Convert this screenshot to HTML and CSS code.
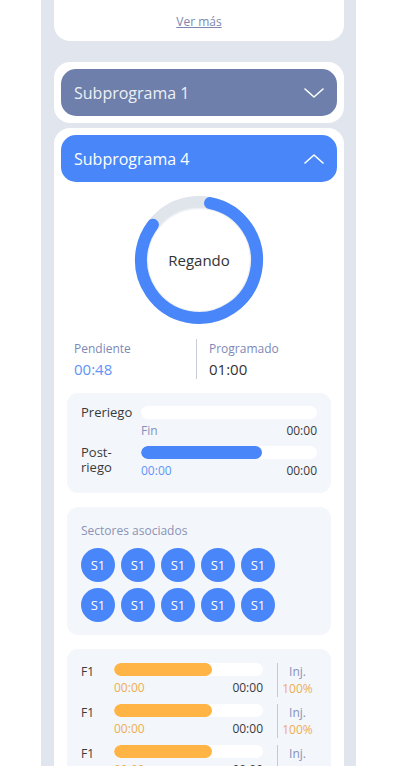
FILE: index.html
```html
<!DOCTYPE html>
<html lang="es">
<head>
    <meta charset="UTF-8">
    <meta name="viewport" content="width=device-width, initial-scale=1.0">
    <title>Subprogramas</title>
    <link rel="stylesheet" href="styles.css">
</head>
<body>
    <div class="screen">
        <div class="card card-top">
            <a href="#" class="more-link">Ver más</a>
        </div>

        <div class="card accordion">
            <div class="accordion-header muted">
                <span>Subprograma 1</span>
                <svg class="chevron" width="20" height="10" viewBox="0 0 20 10">
                    <polyline points="1,1 10,9 19,1" fill="none" stroke="#fff" stroke-width="1.6" stroke-linecap="round" stroke-linejoin="round"/>
                </svg>
            </div>
        </div>

        <div class="card accordion open">
            <div class="accordion-header active">
                <span>Subprograma 4</span>
                <svg class="chevron" width="20" height="10" viewBox="0 0 20 10">
                    <polyline points="1,9 10,1 19,9" fill="none" stroke="#fff" stroke-width="1.6" stroke-linecap="round" stroke-linejoin="round"/>
                </svg>
            </div>

            <div class="donut">
                <svg width="130" height="130" viewBox="0 0 130 130">
                    <circle cx="65" cy="65" r="58" fill="none" stroke="#e0e5ec" stroke-width="12"/>
                    <circle cx="65" cy="65" r="51.5" fill="#fff" stroke="#eef0f3" stroke-width="1.5"/>
                    <circle cx="65" cy="65" r="58" fill="none" stroke="#4886f9" stroke-width="12"
                        stroke-linecap="round" stroke-dasharray="299.6 364.4"
                        transform="rotate(-79 65 65)"/>
                </svg>
                <span class="donut-label">Regando</span>
            </div>

            <div class="stats">
                <div class="stat">
                    <div class="stat-label">Pendiente</div>
                    <div class="stat-value blue">00:48</div>
                </div>
                <div class="stat stat-right">
                    <div class="stat-label">Programado</div>
                    <div class="stat-value">01:00</div>
                </div>
            </div>

            <div class="panel phases">
                <div class="phase">
                    <div class="phase-label">Preriego</div>
                    <div class="bar"><div class="bar-fill" style="width: 0%"></div></div>
                    <div class="times">
                        <span class="muted-text">Fin</span>
                        <span>00:00</span>
                    </div>
                </div>
                <div class="phase">
                    <div class="phase-label">Post-<br>riego</div>
                    <div class="bar"><div class="bar-fill" style="width: 69%"></div></div>
                    <div class="times">
                        <span class="blue">00:00</span>
                        <span>00:00</span>
                    </div>
                </div>
            </div>

            <div class="panel sectors">
                <div class="panel-title">Sectores asociados</div>
                <div class="sector-grid">
                    <span class="sector">S1</span>
                    <span class="sector">S1</span>
                    <span class="sector">S1</span>
                    <span class="sector">S1</span>
                    <span class="sector">S1</span>
                    <span class="sector">S1</span>
                    <span class="sector">S1</span>
                    <span class="sector">S1</span>
                    <span class="sector">S1</span>
                    <span class="sector">S1</span>
                </div>
            </div>

            <div class="panel fertilizers">
                <div class="fert">
                    <div class="fert-name">F1</div>
                    <div class="fert-main">
                        <div class="bar"><div class="bar-fill orange" style="width: 66%"></div></div>
                        <div class="times">
                            <span class="orange-text">00:00</span>
                            <span>00:00</span>
                        </div>
                    </div>
                    <div class="fert-inj">
                        <span class="muted-text">Inj.</span>
                        <span class="orange-text">100%</span>
                    </div>
                </div>
                <div class="fert">
                    <div class="fert-name">F1</div>
                    <div class="fert-main">
                        <div class="bar"><div class="bar-fill orange" style="width: 66%"></div></div>
                        <div class="times">
                            <span class="orange-text">00:00</span>
                            <span>00:00</span>
                        </div>
                    </div>
                    <div class="fert-inj">
                        <span class="muted-text">Inj.</span>
                        <span class="orange-text">100%</span>
                    </div>
                </div>
                <div class="fert">
                    <div class="fert-name">F1</div>
                    <div class="fert-main">
                        <div class="bar"><div class="bar-fill orange" style="width: 66%"></div></div>
                        <div class="times">
                            <span class="orange-text">00:00</span>
                            <span>00:00</span>
                        </div>
                    </div>
                    <div class="fert-inj">
                        <span class="muted-text">Inj.</span>
                        <span class="orange-text">100%</span>
                    </div>
                </div>
            </div>
        </div>
    </div>
</body>
</html>
```

FILE: styles.css
```css
body {
    margin: 0;
    padding: 0;
    background-color: #ffffff;
    font-family: "Open Sans", Arial, sans-serif;
    color: #3a3a3a;
    height: 766px;
    overflow: hidden;
}

.screen {
    margin-left: 41px;
    width: 315px;
    min-height: 100vh;
    box-sizing: border-box;
    padding: 0 12px 0 13px;
    background-color: #e1e6ee;
}

.card {
    background-color: #ffffff;
    border-radius: 16px;
}

.card-top {
    height: 41px;
    border-radius: 0 0 16px 16px;
    box-sizing: border-box;
    padding-top: 9px;
    text-align: center;
}

.more-link {
    font-size: 12px;
    line-height: 16px;
    color: #7d88b0;
    text-decoration: underline;
}

.accordion {
    margin-top: 21px;
    padding: 7px;
}

.accordion.open {
    margin-top: 5px;
    padding-bottom: 20px;
}

.accordion-header {
    height: 47px;
    border-radius: 15px;
    padding: 0 13px;
    display: flex;
    justify-content: space-between;
    align-items: center;
    color: #ffffff;
    font-size: 16px;
}

.accordion-header.muted {
    background-color: #6d7faa;
    color: #eef0f6;
}

.accordion-header.active {
    background-color: #4886f9;
}

.chevron {
    display: block;
}

.donut {
    position: relative;
    width: 130px;
    height: 130px;
    margin: 13px auto 0;
}

.donut svg {
    display: block;
}

.donut-label {
    position: absolute;
    inset: 0;
    display: flex;
    align-items: center;
    justify-content: center;
    font-size: 15px;
    color: #333;
}

.stats {
    display: grid;
    grid-template-columns: 122px 1fr;
    margin: 14px 13px 0;
}

.stat {
    height: 40px;
    box-sizing: border-box;
    padding-top: 2px;
}

.stat-right {
    border-left: 1px solid #c9cdd6;
    padding-left: 12px;
}

.stat-label {
    font-size: 12px;
    line-height: 16px;
    color: #7d89b6;
}

.stat-value {
    margin-top: 2px;
    font-size: 15px;
    line-height: 20px;
    color: #333;
}

.blue {
    color: #5e95f6;
}

.muted-text {
    color: #8591ba;
}

.orange-text {
    color: #eeae52;
}

.panel {
    margin: 14px 6px 0;
    background-color: #f3f6fb;
    border-radius: 11px;
    padding: 14px;
}

.phases {
    padding-top: 13px;
    padding-bottom: 15px;
}

.phase {
    display: grid;
    grid-template-columns: 60px 1fr;
    grid-template-rows: 13px auto;
    row-gap: 4px;
}

.phase + .phase {
    margin-top: 8px;
}

.phase-label {
    grid-row: 1 / 3;
    font-size: 13px;
    line-height: 15px;
    margin-top: -1px;
    color: #3a3a3a;
}

.bar {
    height: 13px;
    border-radius: 7px;
    background-color: #ffffff;
    overflow: hidden;
}

.bar-fill {
    height: 100%;
    border-radius: 7px;
    background-color: #4886f9;
}

.bar-fill.orange {
    background-color: #ffb445;
}

.times {
    display: flex;
    justify-content: space-between;
    font-size: 12px;
    line-height: 15px;
    color: #3a3a3a;
}

.sectors {
    padding-top: 16px;
    padding-bottom: 13px;
}

.panel-title {
    font-size: 12px;
    line-height: 16px;
    color: #8a93b5;
}

.sector-grid {
    display: grid;
    grid-template-columns: repeat(5, 34px);
    gap: 6px 6px;
    margin-top: 9px;
}

.sector {
    width: 34px;
    height: 34px;
    border-radius: 50%;
    background-color: #4886f9;
    color: #ffffff;
    font-size: 13px;
    display: flex;
    align-items: center;
    justify-content: center;
}

.fert {
    display: grid;
    grid-template-columns: 33px 149px 1fr;
    align-items: start;
}

.fert + .fert {
    margin-top: 7px;
}

.fert-name {
    font-size: 12px;
    line-height: 15px;
    margin-top: 1px;
    color: #3a3a3a;
}

.fert-main .times {
    margin-top: 4px;
}

.fert-inj {
    margin-left: 14px;
    border-left: 1px solid #c3c9d8;
    height: 34px;
    display: flex;
    flex-direction: column;
    align-items: center;
    font-size: 12px;
    line-height: 17px;
}
```
